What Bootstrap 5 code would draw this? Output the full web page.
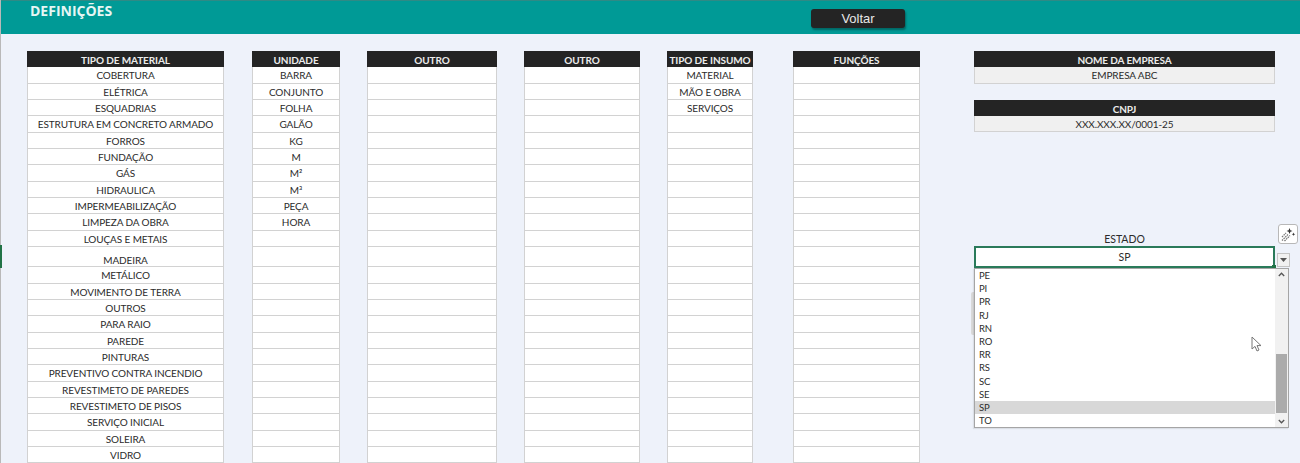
<!doctype html>
<html lang="pt-BR">
<head>
<meta charset="utf-8">
<title>Definições</title>
<link rel="stylesheet" href="https://cdn.jsdelivr.net/npm/bootstrap@5.3.0/dist/css/bootstrap.min.css">
<style>
html,body{height:463px;overflow:hidden}
body{background:#eef2fa;font-family:Lato,"Liberation Sans",sans-serif;color:#2b2b2b;border-left:1px solid #b9b9b9}
.sheet-mark{position:absolute;left:0;top:245px;width:2px;height:23px;background:#217346}
.topbar{height:34px;background:#009a96;border-top:1px solid #2f8a85;padding-left:29px}
.topbar h1{font-family:"Open Sans",sans-serif;font-size:14px;line-height:1;font-weight:700;color:#e6f6f4;margin:3px 0 0;width:781px}
.voltar{width:94px;height:19px;margin-top:8px;padding:0;border:0;border-radius:3px;background:#242424;color:#e8e8e8;font:13px/19px "Liberation Sans",sans-serif;box-shadow:1px 2px 2px rgba(0,60,60,.55)}
.voltar:hover{background:#242424;color:#e8e8e8}
.sheet{padding:17px 0 0 26px}
.c1{width:197px}.c2{width:88px;margin-left:28px}.c3{width:130px;margin-left:27px}.c4{width:116px;margin-left:27px}.c5{width:86px;margin-left:27px}.c6{width:127px;margin-left:40px}
.side{width:301px;margin-left:54px;position:relative}
.hd{height:16.33px;background:#242424;color:#ececec;font-size:10px;letter-spacing:-.1px;font-weight:700;line-height:18.5px;text-align:center;white-space:nowrap}
.cl{height:16.33px;background:#fff;border:solid #d2d2d2;border-width:0 1px 1px;font-size:10px;letter-spacing:-.1px;line-height:17px;text-align:center;white-space:nowrap;color:#2b2b2b}
.cl.tall{height:20.33px;line-height:26px}
.cl.grey{background:#f0f0f0}
.gap16{margin-top:16px}
.est-label{margin-top:100px;height:14px;font-size:10.5px;line-height:14px;text-align:center;color:#2b2b2b}
.est-value{height:22px;background:#fff;border:2px solid #2a7a5a;font-size:10.5px;line-height:19px;text-align:center;color:#2b2b2b;position:relative}
.est-value::after{content:"";position:absolute;right:-3px;bottom:-3px;width:4px;height:4px;background:#217346}
.magic{position:absolute;left:304px;top:173px;width:20px;height:20px;background:#fff;border:1px solid #b8b8b8;border-radius:3px;display:flex;align-items:center;justify-content:center}
.drop-btn{position:absolute;left:303px;top:202px;width:13px;height:14px;background:#f1f1f1;border:1px solid #c4c4c4;display:flex;align-items:center;justify-content:center}
.drop{position:absolute;left:0;top:217px;width:315px;height:160px;background:#fff;border:1px solid #a5a5a5;display:flex;box-shadow:-1px 1px 1px rgba(0,0,0,.08)}
.drop-list{flex:1;min-width:0}
.opt{height:13.2px;padding-left:4px;font-size:9.5px;letter-spacing:-.1px;line-height:13px;color:#2b2b2b}
.opt.sel{background:#d8d8d8}
.track{width:13px;background:#f1f1f1;position:relative;display:flex;flex-direction:column;justify-content:space-between;align-items:center;padding:3px 0}
.thumb{position:absolute;left:1px;right:1px;top:85px;height:59px;background:#ababab}
.drop-shade{position:absolute;left:-3px;top:241px;width:3px;height:43px;background:#d9d9d9;border-radius:2px 0 0 2px}
.cursor{position:absolute;left:277px;top:285px;width:11px;height:17px}
</style>
</head>
<body>
<div class="sheet-mark"></div>
<header class="topbar d-flex align-items-start">
  <h1>DEFINIÇÕES</h1>
  <button class="btn voltar" type="button">Voltar</button>
</header>
<main class="sheet d-flex align-items-start">
  <section class="c1">
    <div class="hd">TIPO DE MATERIAL</div>
    <div class="cl">COBERTURA</div><div class="cl">ELÉTRICA</div><div class="cl">ESQUADRIAS</div><div class="cl">ESTRUTURA EM CONCRETO ARMADO</div><div class="cl">FORROS</div><div class="cl">FUNDAÇÃO</div><div class="cl">GÁS</div><div class="cl">HIDRAULICA</div><div class="cl">IMPERMEABILIZAÇÃO</div><div class="cl">LIMPEZA DA OBRA</div><div class="cl">LOUÇAS E METAIS</div><div class="cl tall">MADEIRA</div><div class="cl">METÁLICO</div><div class="cl">MOVIMENTO DE TERRA</div><div class="cl">OUTROS</div><div class="cl">PARA RAIO</div><div class="cl">PAREDE</div><div class="cl">PINTURAS</div><div class="cl">PREVENTIVO CONTRA INCENDIO</div><div class="cl">REVESTIMETO DE PAREDES</div><div class="cl">REVESTIMETO DE PISOS</div><div class="cl">SERVIÇO INICIAL</div><div class="cl">SOLEIRA</div><div class="cl">VIDRO</div>
  </section>
  <section class="c2">
    <div class="hd">UNIDADE</div>
    <div class="cl">BARRA</div><div class="cl">CONJUNTO</div><div class="cl">FOLHA</div><div class="cl">GALÃO</div><div class="cl">KG</div><div class="cl">M</div><div class="cl">M²</div><div class="cl">M³</div><div class="cl">PEÇA</div><div class="cl">HORA</div><div class="cl"></div><div class="cl tall"></div><div class="cl"></div><div class="cl"></div><div class="cl"></div><div class="cl"></div><div class="cl"></div><div class="cl"></div><div class="cl"></div><div class="cl"></div><div class="cl"></div><div class="cl"></div><div class="cl"></div><div class="cl"></div>
  </section>
  <section class="c3">
    <div class="hd">OUTRO</div>
    <div class="cl"></div><div class="cl"></div><div class="cl"></div><div class="cl"></div><div class="cl"></div><div class="cl"></div><div class="cl"></div><div class="cl"></div><div class="cl"></div><div class="cl"></div><div class="cl"></div><div class="cl tall"></div><div class="cl"></div><div class="cl"></div><div class="cl"></div><div class="cl"></div><div class="cl"></div><div class="cl"></div><div class="cl"></div><div class="cl"></div><div class="cl"></div><div class="cl"></div><div class="cl"></div><div class="cl"></div>
  </section>
  <section class="c4">
    <div class="hd">OUTRO</div>
    <div class="cl"></div><div class="cl"></div><div class="cl"></div><div class="cl"></div><div class="cl"></div><div class="cl"></div><div class="cl"></div><div class="cl"></div><div class="cl"></div><div class="cl"></div><div class="cl"></div><div class="cl tall"></div><div class="cl"></div><div class="cl"></div><div class="cl"></div><div class="cl"></div><div class="cl"></div><div class="cl"></div><div class="cl"></div><div class="cl"></div><div class="cl"></div><div class="cl"></div><div class="cl"></div><div class="cl"></div>
  </section>
  <section class="c5">
    <div class="hd">TIPO DE INSUMO</div>
    <div class="cl">MATERIAL</div><div class="cl">MÃO E OBRA</div><div class="cl">SERVIÇOS</div><div class="cl"></div><div class="cl"></div><div class="cl"></div><div class="cl"></div><div class="cl"></div><div class="cl"></div><div class="cl"></div><div class="cl"></div><div class="cl tall"></div><div class="cl"></div><div class="cl"></div><div class="cl"></div><div class="cl"></div><div class="cl"></div><div class="cl"></div><div class="cl"></div><div class="cl"></div><div class="cl"></div><div class="cl"></div><div class="cl"></div><div class="cl"></div>
  </section>
  <section class="c6">
    <div class="hd">FUNÇÕES</div>
    <div class="cl"></div><div class="cl"></div><div class="cl"></div><div class="cl"></div><div class="cl"></div><div class="cl"></div><div class="cl"></div><div class="cl"></div><div class="cl"></div><div class="cl"></div><div class="cl"></div><div class="cl tall"></div><div class="cl"></div><div class="cl"></div><div class="cl"></div><div class="cl"></div><div class="cl"></div><div class="cl"></div><div class="cl"></div><div class="cl"></div><div class="cl"></div><div class="cl"></div><div class="cl"></div><div class="cl"></div>
  </section>
  <aside class="side">
    <div class="hd">NOME DA EMPRESA</div>
    <div class="cl grey">EMPRESA ABC</div>
    <div class="hd gap16">CNPJ</div>
    <div class="cl grey">XXX.XXX.XX/0001-25</div>
    <div class="est-label">ESTADO</div>
    <div class="est-value">SP</div>
    <div class="magic">
      <svg width="15" height="15" viewBox="0 0 15 15" fill="none"><path d="M8.5 1l.9 2.200 2.100.8-2.100.8-.9 2.200-.9-2.200-2.100-.8 2.100-.8z" fill="#333"/><path d="M12.500 5.500l.5 1.300 1.300.5-1.300.5-.5 1.300-.5-1.300-1.300-.5 1.300-.5z" fill="#333"/><path d="M1 13.500L7.500 7M3.500 14L9 8.500M1 10l4-4" stroke="#777" stroke-width="1.300" stroke-dasharray="1.500 .8"/></svg>
    </div>
    <div class="drop-btn"><svg width="7" height="4" viewBox="0 0 7 4"><path d="M0 0h7L3.500 4z" fill="#555"/></svg></div>
    <div class="drop-shade"></div>
    <div class="drop">
      <div class="drop-list">
        <div class="opt">PE</div><div class="opt">PI</div><div class="opt">PR</div><div class="opt">RJ</div><div class="opt">RN</div><div class="opt">RO</div><div class="opt">RR</div><div class="opt">RS</div><div class="opt">SC</div><div class="opt">SE</div><div class="opt sel">SP</div><div class="opt">TO</div>
      </div>
      <div class="track">
        <svg width="7" height="5" viewBox="0 0 7 5" fill="none"><path d="M.8 4L3.500 1.200 6.200 4" stroke="#555" stroke-width="1.300"/></svg>
        <div class="thumb"></div>
        <svg width="7" height="5" viewBox="0 0 7 5" fill="none"><path d="M.8 1L3.500 3.800 6.200 1" stroke="#555" stroke-width="1.300"/></svg>
      </div>
    </div>
    <svg class="cursor" viewBox="0 0 11 17"><path d="M1 1v12l3-2.600L6 15l2-1-2-4.400h4z" fill="#fff" stroke="#777" stroke-width="1"/></svg>
  </aside>
</main>
<script src="https://cdn.jsdelivr.net/npm/bootstrap@5.3.0/dist/js/bootstrap.bundle.min.js"></script>
</body>
</html>
